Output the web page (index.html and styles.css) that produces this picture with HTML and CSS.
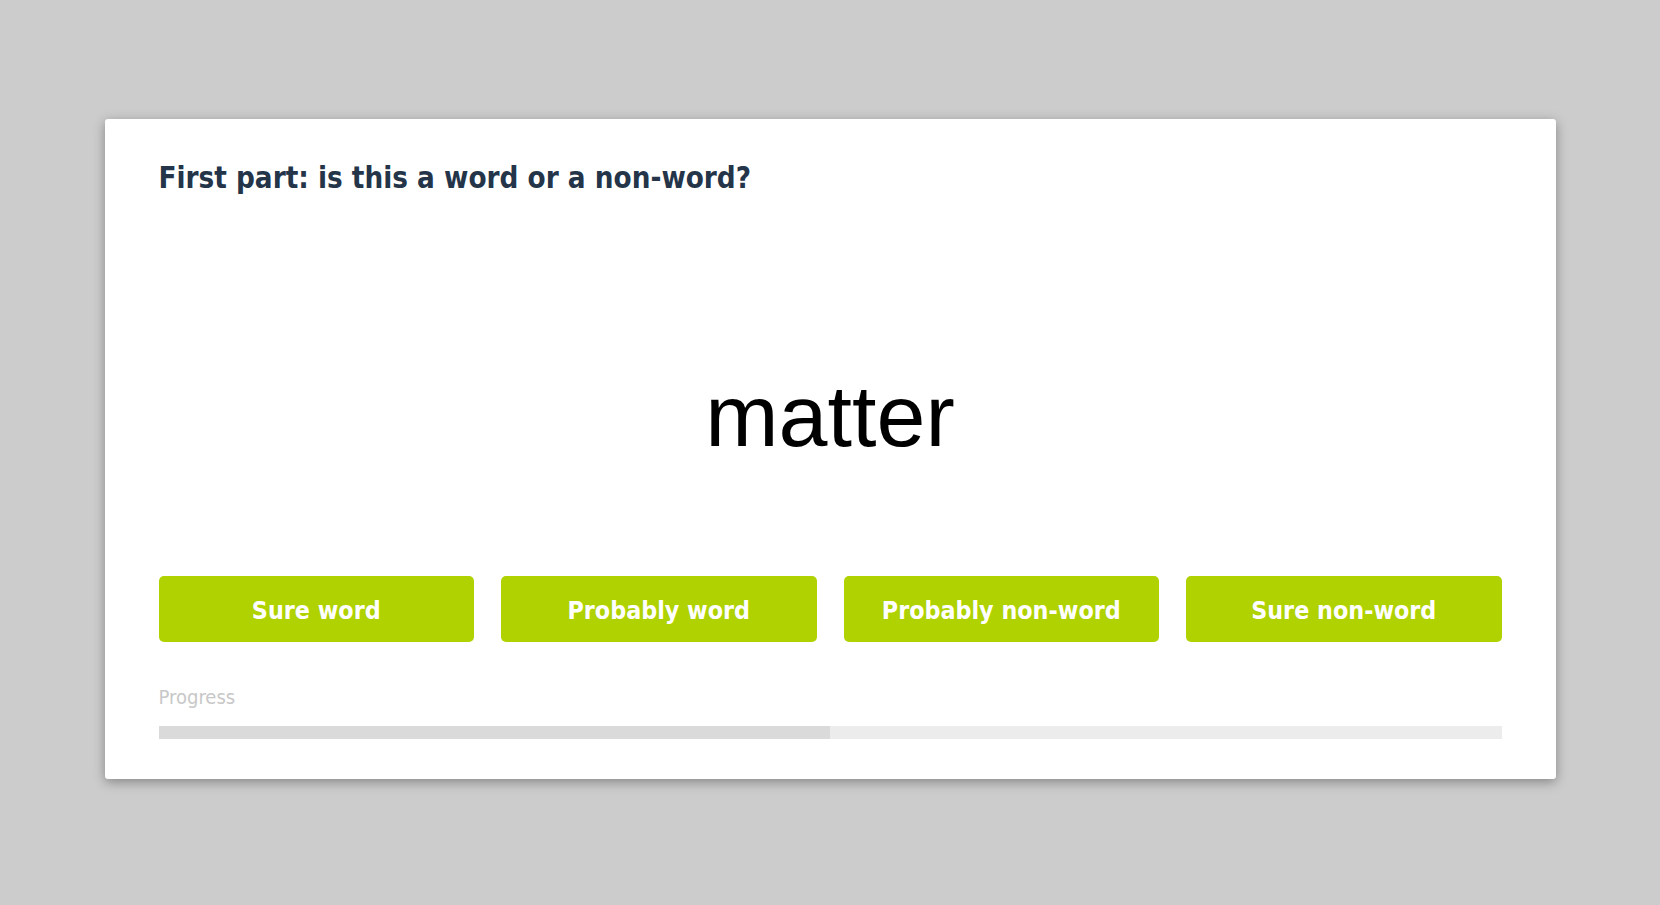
FILE: index.html
```html
<!DOCTYPE html>
<html lang="en">
<head>
<meta charset="utf-8">
<title>Lexical decision</title>
<link rel="stylesheet" href="styles.css">
</head>
<body>
<main class="card">
  <h1 class="question">First part: is this a word or a non-word?</h1>
  <div class="stimulus">matter</div>
  <div class="choices">
    <button class="choice">Sure word</button>
    <button class="choice">Probably word</button>
    <button class="choice">Probably non-word</button>
    <button class="choice">Sure non-word</button>
  </div>
  <div class="progress-label">Progress</div>
  <div class="progress-track"><div class="progress-fill" style="width:50%"></div></div>
</main>
</body>
</html>
```
FILE: styles.css
```css
html, body {
  margin: 0;
  padding: 0;
}
body {
  background: #cccccc;
  height: 905px;
  overflow: hidden;
  display: flex;
  flex-direction: column;
  align-items: center;
  padding-top: 119px;
  box-sizing: border-box;
  font-family: "DejaVu Sans Condensed", "DejaVu Sans", sans-serif;
  font-stretch: semi-condensed;
}
.card {
  width: 1451px;
  height: 660px;
  box-sizing: border-box;
  background: #ffffff;
  border-radius: 3px;
  box-shadow: 0 3px 12px rgba(0, 0, 0, 0.35);
  padding: 41px 54px 40px;
  display: flex;
  flex-direction: column;
}
.question {
  margin: 0;
  font-size: 29.3px;
  line-height: 36px;
  font-weight: bold;
  color: #243549;
}
.stimulus {
  margin-top: 170px;
  height: 100px;
  font-family: "Liberation Sans", Arial, sans-serif;
  font-stretch: normal;
  font-size: 88px;
  line-height: 100px;
  color: #000000;
  text-align: center;
}
.choices {
  margin-top: 110px;
  display: grid;
  grid-template-columns: repeat(4, 1fr);
  gap: 27px;
}
.choice {
  height: 66px;
  border: none;
  border-radius: 5px;
  background: #b0d200;
  color: #ffffff;
  font-family: inherit;
  font-stretch: inherit;
  font-weight: bold;
  font-size: 24.8px;
  line-height: 30px;
  padding: 4px 0 0;
  display: flex;
  align-items: center;
  justify-content: center;
}
.progress-label {
  margin-top: 43px;
  font-size: 20px;
  line-height: 24px;
  color: #c8c8c8;
}
.progress-track {
  margin-top: 17px;
  height: 13px;
  background: #ececec;
}
.progress-fill {
  height: 100%;
  background: #dadada;
}
```
